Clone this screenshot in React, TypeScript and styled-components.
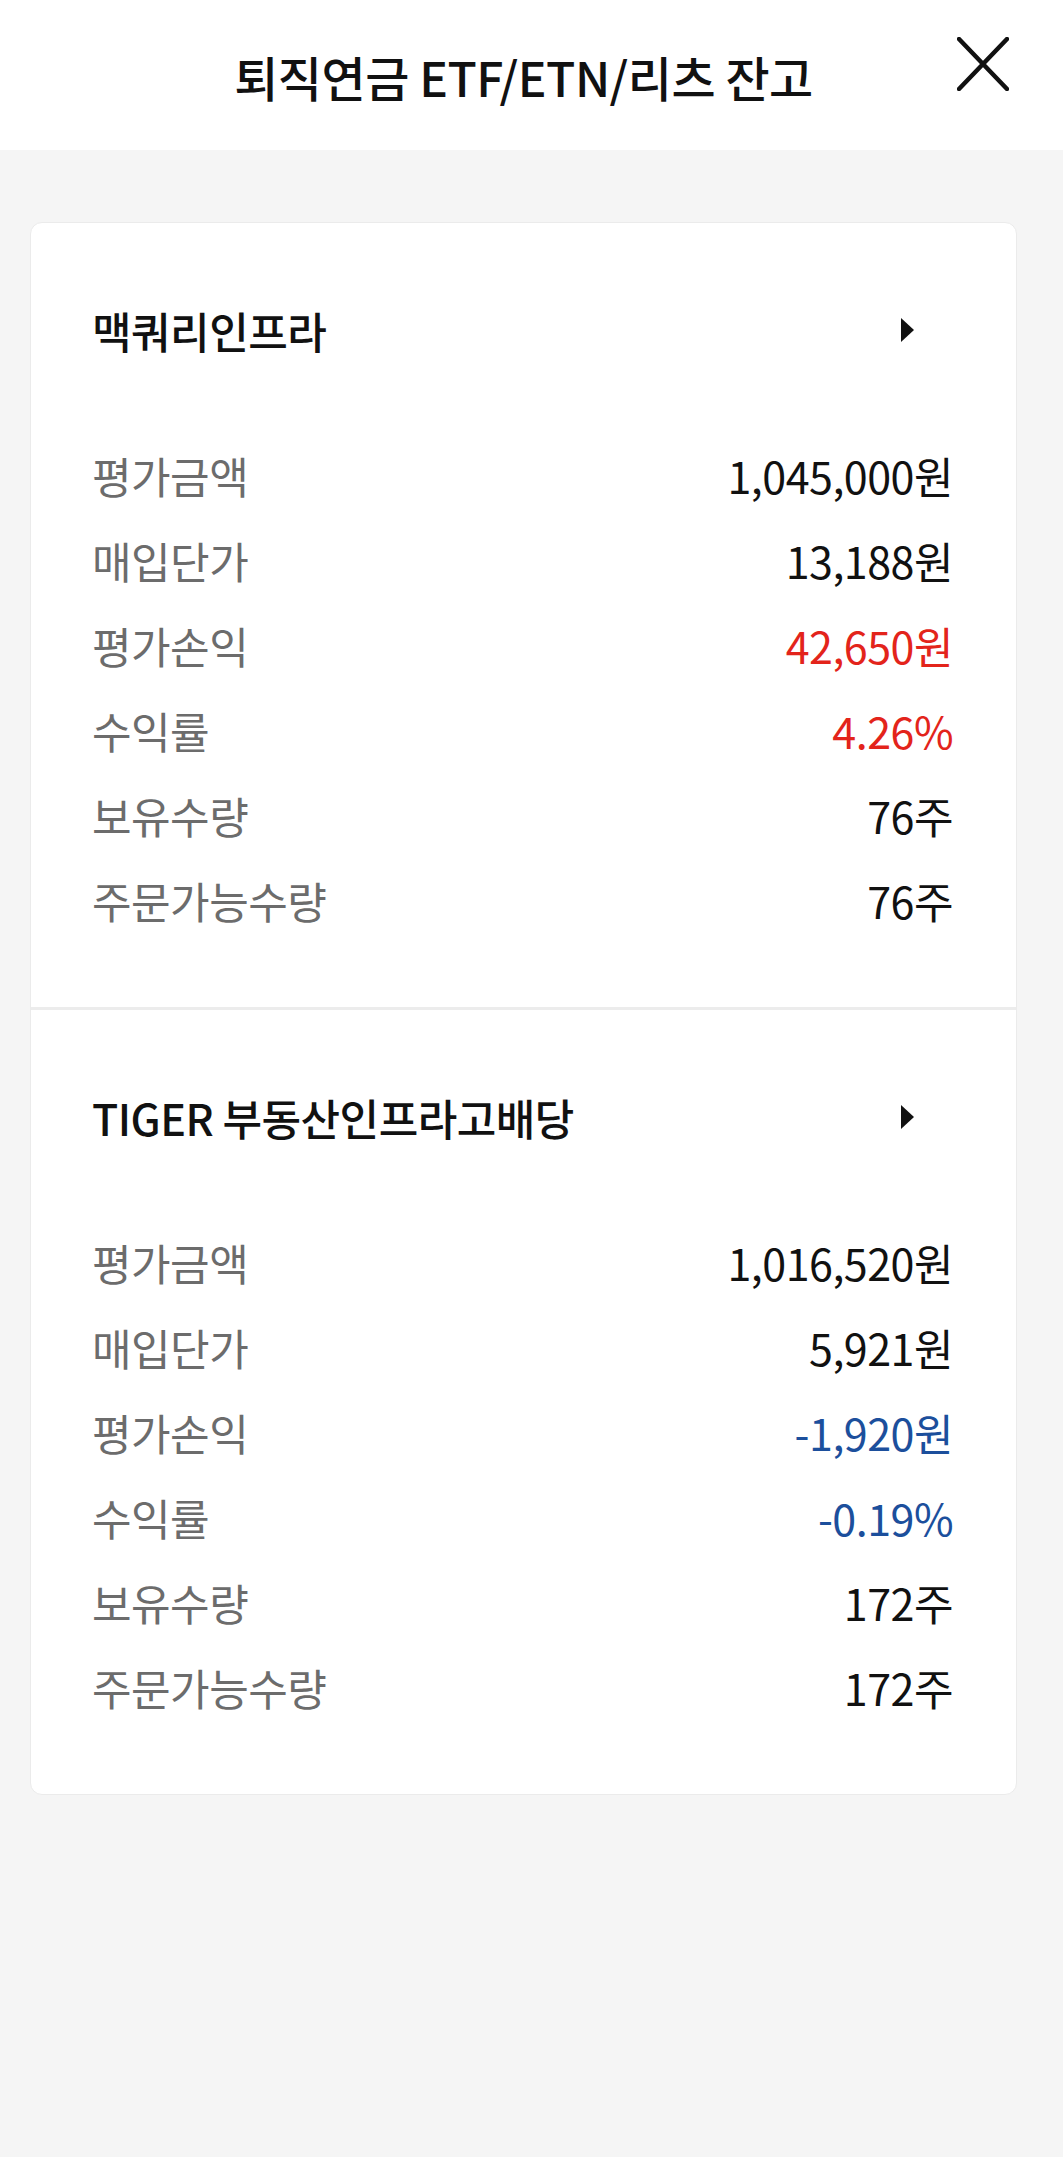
import styled, { createGlobalStyle } from 'styled-components';

const GlobalStyle = createGlobalStyle`
  html, body {
    margin: 0;
    padding: 0;
    background: #f5f5f5;
  }
  body {
    font-family: 'Noto Sans CJK KR', 'Noto Sans', sans-serif;
    color: #111;
  }
`;

const Page = styled.div`
  width: 1063px;
  min-height: 2157px;
  background: #f5f5f5;
`;

const Header = styled.header`
  height: 150px;
  background: #fff;
  display: flex;
  align-items: center;
  justify-content: center;
  position: relative;
`;

const Title = styled.h1`
  margin: 0;
  padding: 2px 16px 0 0;
  font-size: 48px;
  font-weight: 500;
  letter-spacing: -0.5px;
  color: #111;
`;

const CloseButton = styled.button`
  position: absolute;
  right: 52px;
  top: 36px;
  width: 56px;
  height: 56px;
  padding: 0;
  border: none;
  background: none;
  display: flex;
  align-items: center;
  justify-content: center;
`;

const Content = styled.main`
  padding: 72px 46px 0 30px;
`;

const Card = styled.section`
  background: #fff;
  border: 1px solid #ebebeb;
  border-radius: 12px;
  overflow: hidden;
`;

const Holding = styled.div`
  padding: 77px 63px 65px 61px;
  & + & {
    border-top: 3px solid #ececec;
  }
`;

const NameRow = styled.div`
  height: 60px;
  display: flex;
  align-items: center;
  justify-content: space-between;
  margin-bottom: 72px;
`;

const Name = styled.span`
  font-size: 43px;
  font-weight: 500;
  letter-spacing: -0.5px;
  color: #111;
`;

const Arrow = styled.span`
  width: 0;
  height: 0;
  margin-right: 39px;
  border-top: 12px solid transparent;
  border-bottom: 12px solid transparent;
  border-left: 13px solid #111;
`;

const Row = styled.div`
  height: 85px;
  display: flex;
  align-items: center;
  justify-content: space-between;
`;

const Label = styled.span`
  font-size: 43px;
  color: #6c6c6c;
  letter-spacing: -0.5px;
`;

const Value = styled.span<{ tone?: 'up' | 'down' }>`
  font-size: 43px;
  letter-spacing: -0.5px;
  color: ${(p) => (p.tone === 'up' ? '#e3241b' : p.tone === 'down' ? '#1c4f9c' : '#111')};
`;

type Item = {
  name: string;
  rows: { label: string; value: string; tone?: 'up' | 'down' }[];
};

const items: Item[] = [
  {
    name: '맥쿼리인프라',
    rows: [
      { label: '평가금액', value: '1,045,000원' },
      { label: '매입단가', value: '13,188원' },
      { label: '평가손익', value: '42,650원', tone: 'up' },
      { label: '수익률', value: '4.26%', tone: 'up' },
      { label: '보유수량', value: '76주' },
      { label: '주문가능수량', value: '76주' },
    ],
  },
  {
    name: 'TIGER 부동산인프라고배당',
    rows: [
      { label: '평가금액', value: '1,016,520원' },
      { label: '매입단가', value: '5,921원' },
      { label: '평가손익', value: '-1,920원', tone: 'down' },
      { label: '수익률', value: '-0.19%', tone: 'down' },
      { label: '보유수량', value: '172주' },
      { label: '주문가능수량', value: '172주' },
    ],
  },
];

const App = () => (
  <Page>
    <GlobalStyle />
    <Header>
      <Title>퇴직연금 ETF/ETN/리츠 잔고</Title>
      <CloseButton aria-label="닫기">
        <svg width="52" height="54" viewBox="0 0 52 54">
          <path d="M2 2 L50 52 M50 2 L2 52" stroke="#111" strokeWidth="4.5" strokeLinecap="round" />
        </svg>
      </CloseButton>
    </Header>
    <Content>
      <Card>
        {items.map((item) => (
          <Holding key={item.name}>
            <NameRow>
              <Name>{item.name}</Name>
              <Arrow />
            </NameRow>
            {item.rows.map((row) => (
              <Row key={row.label}>
                <Label>{row.label}</Label>
                <Value tone={row.tone}>{row.value}</Value>
              </Row>
            ))}
          </Holding>
        ))}
      </Card>
    </Content>
  </Page>
);

export default App;
